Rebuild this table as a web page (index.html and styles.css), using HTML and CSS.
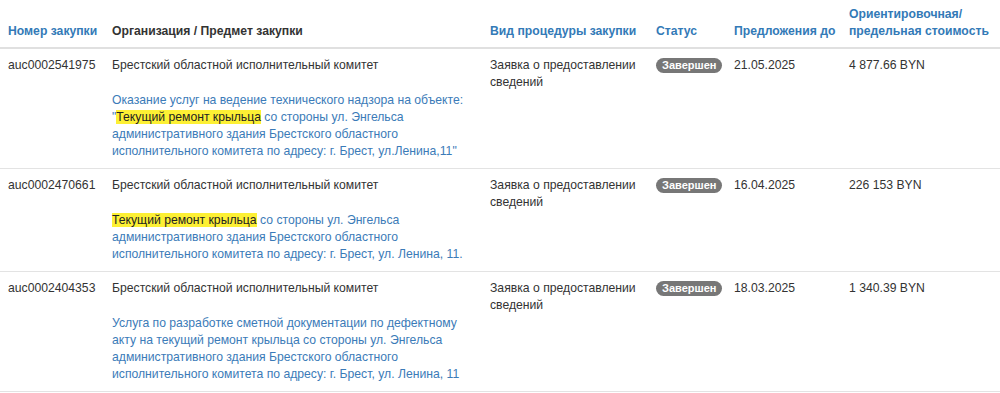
FILE: index.html
```html
<!DOCTYPE html>
<html lang="ru">
<head>
<meta charset="utf-8">
<title>Закупки</title>
<link rel="stylesheet" href="styles.css">
</head>
<body>
<table class="grid">
  <thead>
    <tr>
      <th class="c-num sortable">Номер закупки</th>
      <th class="c-org">Организация / Предмет закупки</th>
      <th class="c-proc sortable">Вид процедуры закупки</th>
      <th class="c-status sortable">Статус</th>
      <th class="c-date sortable">Предложения до</th>
      <th class="c-cost sortable">Ориентировочная/<br>предельная стоимость</th>
    </tr>
  </thead>
  <tbody>
    <tr>
      <td>auc0002541975</td>
      <td>
        <div>Брестский областной исполнительный комитет</div>
        <div class="subject">Оказание услуг на ведение технического надзора на объекте: "<mark>Текущий ремонт крыльца</mark> со стороны ул. Энгельса административного здания Брестского областного исполнительного комитета по адресу: г. Брест, ул.Ленина,11"</div>
      </td>
      <td>Заявка о предоставлении сведений</td>
      <td><span class="badge">Завершен</span></td>
      <td>21.05.2025</td>
      <td>4 877.66 BYN</td>
    </tr>
    <tr>
      <td>auc0002470661</td>
      <td>
        <div>Брестский областной исполнительный комитет</div>
        <div class="subject"><mark>Текущий ремонт крыльца</mark> со стороны ул. Энгельса административного здания Брестского областного исполнительного комитета по адресу: г. Брест, ул. Ленина, 11.</div>
      </td>
      <td>Заявка о предоставлении сведений</td>
      <td><span class="badge">Завершен</span></td>
      <td>16.04.2025</td>
      <td>226 153 BYN</td>
    </tr>
    <tr>
      <td>auc0002404353</td>
      <td>
        <div>Брестский областной исполнительный комитет</div>
        <div class="subject">Услуга по разработке сметной документации по дефектному акту на текущий ремонт крыльца со стороны ул. Энгельса административного здания Брестского областного исполнительного комитета по адресу: г. Брест, ул. Ленина, 11</div>
      </td>
      <td>Заявка о предоставлении сведений</td>
      <td><span class="badge">Завершен</span></td>
      <td>18.03.2025</td>
      <td>1 340.39 BYN</td>
    </tr>
  </tbody>
</table>
</body>
</html>
```

FILE: styles.css
```css
html, body {
  margin: 0;
  padding: 0;
  background: #fff;
}

body {
  font-family: "Liberation Sans", Arial, sans-serif;
  font-size: 12.2px;
  line-height: 17px;
  color: #333;
}

.grid {
  width: 1000px;
  border-collapse: collapse;
  table-layout: fixed;
  border-bottom: 1px solid #e3e3e3;
}

.grid th {
  text-align: left;
  font-weight: bold;
  vertical-align: bottom;
  white-space: nowrap;
  padding: 6px 8px 7px;
  border-bottom: 2px solid #e0e0e0;
  color: #333;
}

.grid th.sortable {
  color: #337ab7;
}

.c-num { width: 88px; }
.c-org { width: 362px; }
.c-proc { width: 150px; }
.c-status { width: 62px; }
.c-date { width: 99px; }
.c-cost { width: 143px; }

.grid td {
  vertical-align: top;
  padding: 8px;
  border-top: 1px solid #e3e3e3;
}

.subject {
  margin-top: 18px;
  color: #3b7bb8;
}

.subject mark {
  background: #fdf034;
  color: #222;
}

.badge {
  display: inline-block;
  background: #777;
  color: #fff;
  font-weight: bold;
  font-size: 11px;
  line-height: 11px;
  padding: 2px 6px;
  border-radius: 8px;
  margin-top: 1px;
  vertical-align: top;
}
```
